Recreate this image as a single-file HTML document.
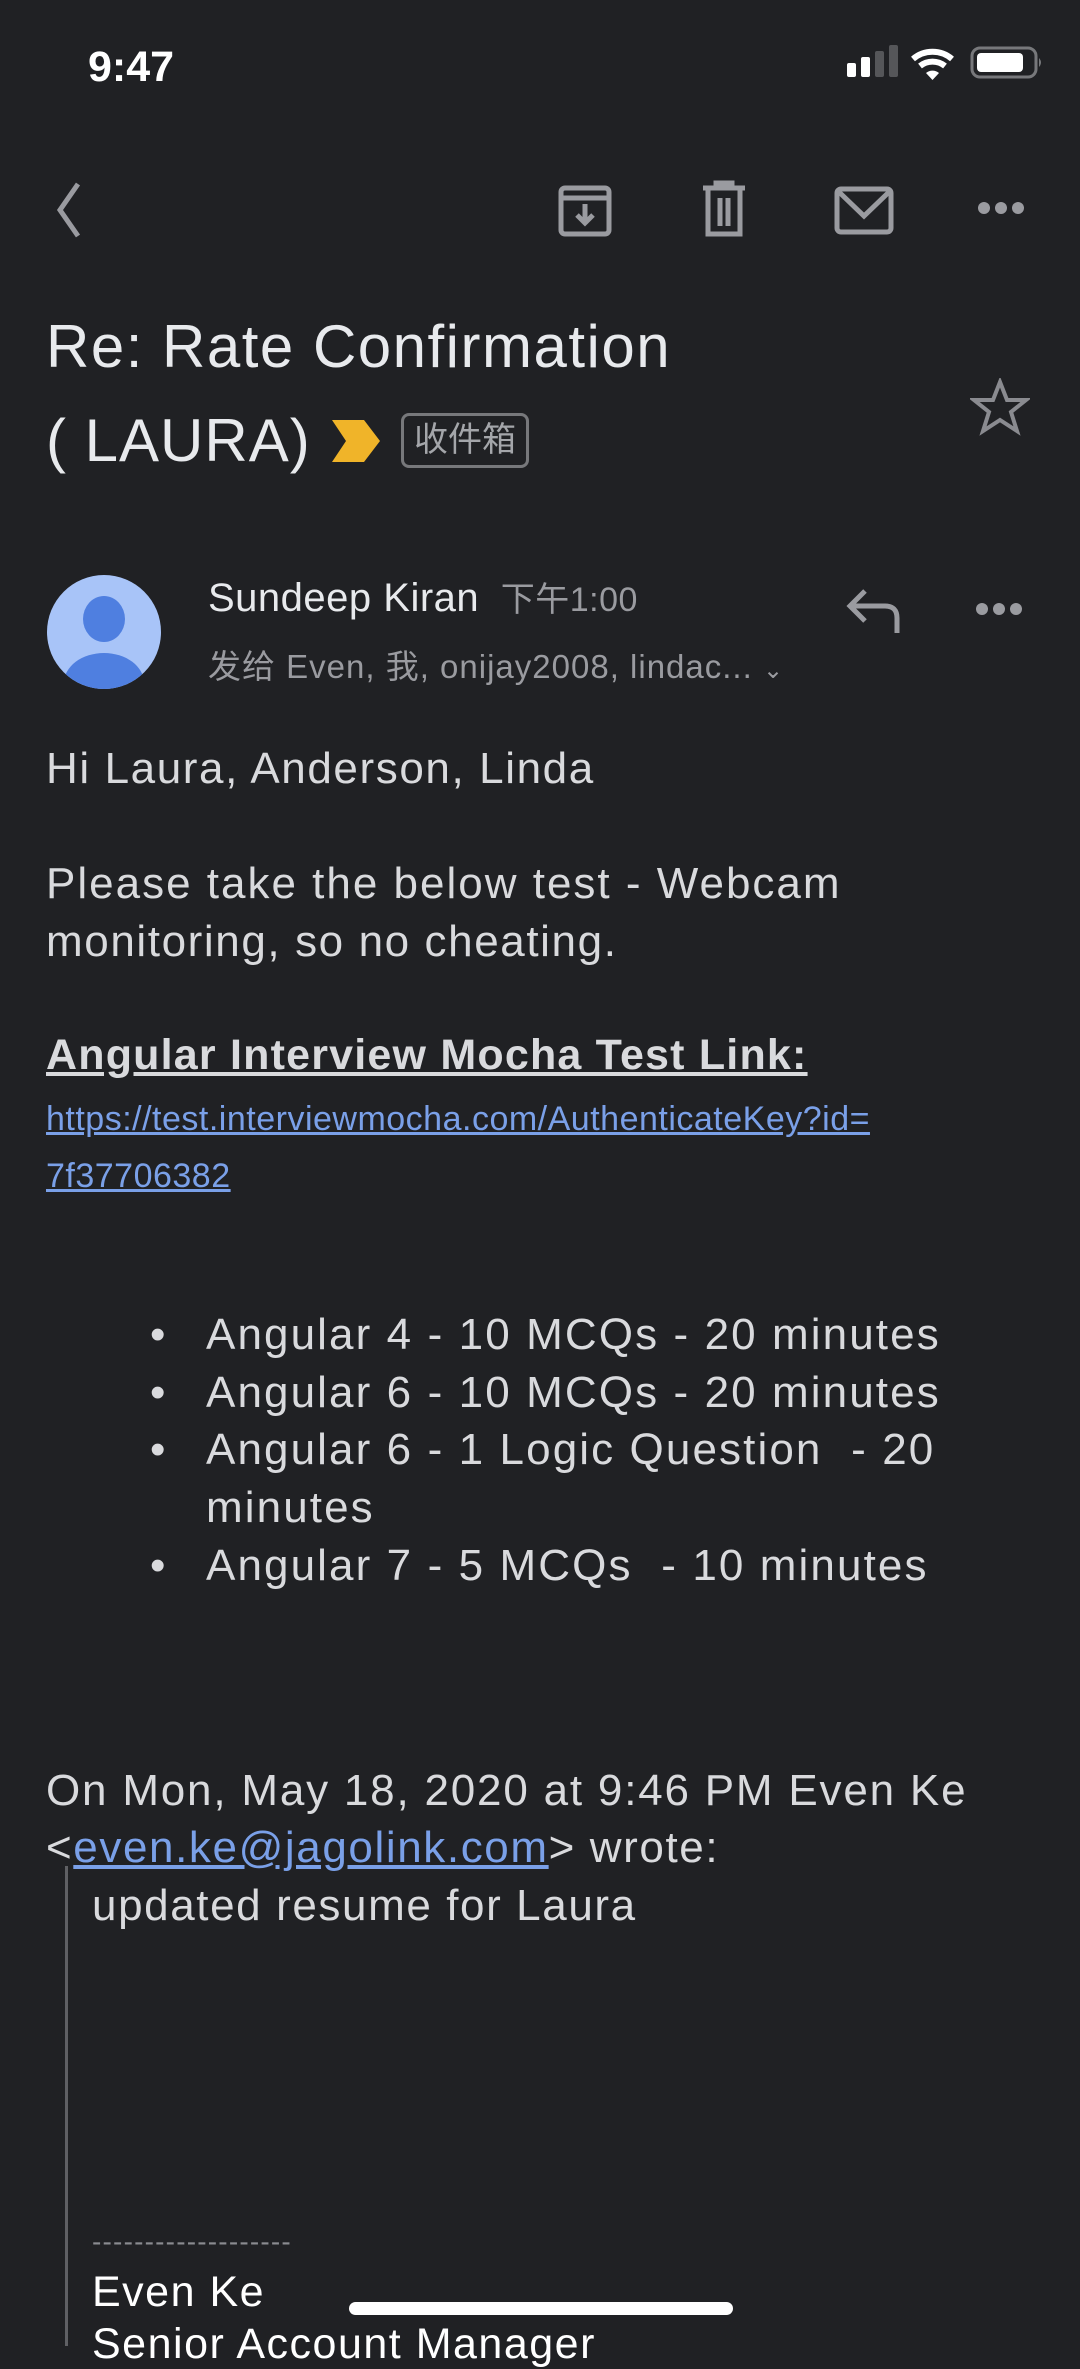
<!DOCTYPE html>
<html><head><meta charset="utf-8"><style>
*{margin:0;padding:0;box-sizing:border-box}
body{width:1080px;height:2339px;background:#202124;overflow:hidden;position:relative;font-family:"Liberation Sans","Noto Sans CJK SC",sans-serif;color:#dcdde0}
.a{position:absolute;white-space:nowrap}
.body{font-size:44px;color:#d9dadd;letter-spacing:1.6px}
.lnk{color:#7aa0e8;text-decoration:underline}
.li{position:relative;padding-left:56px}
.li b{position:absolute;left:0;top:0;font-weight:normal}
</style></head><body>
<div class="a" style="left:88px;top:43px;font-size:43px;font-weight:bold;color:#fff">9:47</div>
<svg class="a" style="left:840px;top:45px" width="210" height="45">
<rect x="7" y="18" width="9" height="14" rx="2" fill="#fff"/>
<rect x="21" y="12" width="9" height="20" rx="2" fill="#fff"/>
<rect x="35" y="6" width="9" height="26" rx="2" fill="#555659"/>
<rect x="49" y="0" width="9" height="32" rx="2" fill="#555659"/>
<path d="M73 14 A30 30 0 0 1 112 14" stroke="#fff" stroke-width="6" fill="none"/>
<path d="M80 21 A20 20 0 0 1 105 21" stroke="#fff" stroke-width="6" fill="none"/>
<path d="M86 28 L92.5 35 L99 28 A10 10 0 0 0 86 28Z" fill="#fff"/>
<rect x="132" y="3" width="64" height="29" rx="8" stroke="#77787b" stroke-width="3" fill="none"/>
<rect x="137" y="8" width="46" height="19" rx="4" fill="#fff"/>
<path d="M199 13 Q203 17.5 199 22Z" fill="#77787b"/>
</svg>
<svg class="a" style="left:40px;top:180px" width="1020" height="60" fill="none" stroke="#9a9ba0" stroke-width="5">
<path d="M38 4 L20 30 L38 56" stroke-width="5"/>
<rect x="521" y="8" width="48" height="46" rx="4"/><path d="M521 18 H569"/><path d="M545 24 V42 M537 35 L545 43 L553 35"/>
<path d="M663 8 H705 M676 8 V3 H692 V8 M668 10 V54 H700 V10 M680 18 V46 M688 18 V46"/>
<rect x="797" y="9" width="54" height="43" rx="4"/><path d="M799 12 L824 36 L849 12"/>
</svg>
<svg class="a" style="left:972px;top:196px" width="60" height="24"><circle cx="12" cy="12" r="6" fill="#9a9ba0"/><circle cx="29" cy="12" r="6" fill="#9a9ba0"/><circle cx="46" cy="12" r="6" fill="#9a9ba0"/></svg>
<div class="a" style="left:46px;top:312px;font-size:60px;color:#e8eaed;letter-spacing:1.5px">Re: Rate Confirmation</div>
<div class="a" style="left:46px;top:406px;font-size:60px;color:#e8eaed;letter-spacing:1px">( LAURA)</div>
<svg class="a" style="left:330px;top:418px" width="52" height="46"><path d="M2 2 H34 L50 23 L34 44 H2 L16 23Z" fill="#f0b429"/></svg>
<div class="a" style="left:401px;top:413px;width:128px;height:55px;border:3px solid #77787b;border-radius:8px;font-size:34px;color:#a4a6aa;text-align:center;line-height:49px">收件箱</div>
<svg class="a" style="left:970px;top:378px" width="60" height="60"><path d="M30 4 L37 22 L56 22 L41 34 L47 53 L30 42 L13 53 L19 34 L4 22 L23 22Z" fill="none" stroke="#8a8b90" stroke-width="4"/></svg>
<svg class="a" style="left:47px;top:575px" width="115" height="115"><defs><clipPath id="c"><circle cx="57" cy="57" r="57"/></clipPath></defs><circle cx="57" cy="57" r="57" fill="#a8c4f8"/><g clip-path="url(#c)" fill="#4f7fe0"><ellipse cx="57" cy="44" rx="21" ry="23"/><ellipse cx="57" cy="108" rx="40" ry="30"/></g></svg>
<div class="a" style="left:208px;top:572px;font-size:40px;color:#e8eaed;letter-spacing:0.5px">Sundeep Kiran <span style="font-size:34px;color:#9a9ba0;margin-left:10px">下午1:00</span></div>
<div class="a" style="left:208px;top:640px;font-size:33px;color:#9a9ba0;letter-spacing:1px">发给 Even, 我, onijay2008, lindac... <span style="font-size:24px">⌄</span></div>
<svg class="a" style="left:845px;top:585px" width="60" height="55" fill="none" stroke="#9a9ba0" stroke-width="5"><path d="M20 6 L5 21 L20 36 M5 21 H40 Q52 21 52 33 V48"/></svg>
<svg class="a" style="left:970px;top:597px" width="60" height="24"><circle cx="12" cy="12" r="6" fill="#9a9ba0"/><circle cx="29" cy="12" r="6" fill="#9a9ba0"/><circle cx="46" cy="12" r="6" fill="#9a9ba0"/></svg>
<div class="a body" style="left:46px;top:744px">Hi Laura, Anderson, Linda</div>
<div class="a body" style="left:46px;top:859px;letter-spacing:2px">Please take the below test - Webcam</div>
<div class="a body" style="left:46px;top:917px">monitoring, so no cheating.</div>
<div class="a body" style="left:46px;top:1031px;font-weight:bold;text-decoration:underline;font-size:43px;letter-spacing:1.2px">Angular Interview Mocha Test Link:</div>
<div class="a lnk" style="left:46px;top:1100px;font-size:34px;letter-spacing:0.5px">https://test.interviewmocha.com/AuthenticateKey?id=</div>
<div class="a lnk" style="left:46px;top:1157px;font-size:34px;letter-spacing:0.5px">7f37706382</div>
<div class="a body" style="left:150px;top:1306px;line-height:57.7px;letter-spacing:2.1px">
<div class="li"><b>•</b>Angular 4 - 10 MCQs - 20 minutes</div>
<div class="li"><b>•</b>Angular 6 - 10 MCQs - 20 minutes</div>
<div class="li"><b>•</b>Angular 6 - 1 Logic Question &nbsp;- 20</div>
<div class="li">minutes</div>
<div class="li"><b>•</b>Angular 7 - 5 MCQs &nbsp;- 10 minutes</div>
</div>
<div class="a body" style="left:46px;top:1766px;letter-spacing:1.8px">On Mon, May 18, 2020 at 9:46 PM Even Ke</div>
<div class="a body" style="left:46px;top:1823px">&lt;<span class="lnk">even.ke@jagolink.com</span>&gt; wrote:</div>
<div class="a" style="left:65px;top:1866px;width:3px;height:480px;background:#5f6064"></div>
<div class="a body" style="left:92px;top:1881px">updated resume for Laura</div>
<div class="a" style="left:92px;top:2226px;font-size:28px;color:#8a8b90;letter-spacing:1.2px">-------------------</div>
<div class="a body" style="left:92px;top:2268px;color:#fff;font-size:43px;letter-spacing:1.5px">Even Ke</div>
<div class="a body" style="left:92px;top:2320px;color:#fff;font-size:43px;letter-spacing:1.5px">Senior Account Manager</div>
<div class="a" style="left:349px;top:2302px;width:384px;height:13px;border-radius:7px;background:#fff"></div>
</body></html>
